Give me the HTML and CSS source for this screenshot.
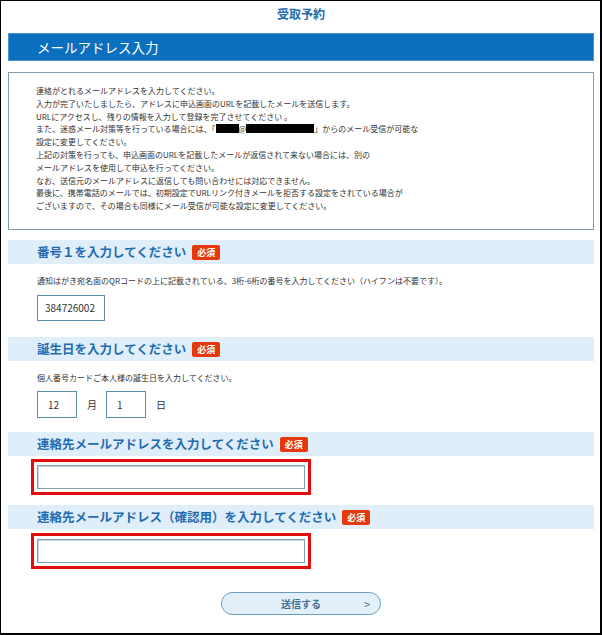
FILE: index.html
```html
<!DOCTYPE html>
<html lang="ja">
<head>
<meta charset="UTF-8">
<title>受取予約</title>
<link rel="stylesheet" href="styles.css">
</head>
<body>
<div class="frame">
	<h1 class="page-title">受取予約</h1>
	<div class="bar">メールアドレス入力</div>

	<div class="notice">
		<p>連絡がとれるメールアドレスを入力してください。</p>
		<p>入力が完了いたしましたら、アドレスに申込画面のURLを記載したメールを送信します。</p>
		<p>URLにアクセスし、残りの情報を入力して登録を完了させてください 。</p>
		<p>また、迷惑メール対策等を行っている場合には、「<span class="mask mask-a"></span>@<span class="mask mask-b"></span>」からのメール受信が可能な</p>
		<p>設定に変更してください。</p>
		<p>上記の対策を行っても、申込画面のURLを記載したメールが返信されて来ない場合には、別の</p>
		<p>メールアドレスを使用して申込を行ってください。</p>
		<p>なお、送信元のメールアドレスに返信しても問い合わせには対応できません。</p>
		<p>最後に、携帯電話のメールでは、初期設定でURLリンク付きメールを拒否する設定をされている場合が</p>
		<p>ございますので、その場合も同様にメール受信が可能な設定に変更してください。</p>
	</div>

	<div class="field first">
		<h2 class="field-head">番号１を入力してください<span class="req">必須</span></h2>
		<p class="desc">通知はがき宛名面のQRコードの上に記載されている、3桁-6桁の番号を入力してください（ハイフンは不要です）。</p>
		<div class="row"><span class="box num">384726002</span></div>
	</div>

	<div class="field second">
		<h2 class="field-head">誕生日を入力してください<span class="req">必須</span></h2>
		<p class="desc">個人番号カードご本人様の誕生日を入力してください。</p>
		<div class="row date">
			<span class="box small">12</span><span class="unit">月</span>
			<span class="box small">1</span><span class="unit">日</span>
		</div>
	</div>

	<div class="field third">
		<h2 class="field-head">連絡先メールアドレスを入力してください<span class="req">必須</span></h2>
		<div class="mark"><span class="box wide"></span></div>
	</div>

	<div class="field fourth">
		<h2 class="field-head">連絡先メールアドレス（確認用）を入力してください<span class="req">必須</span></h2>
		<div class="mark"><span class="box wide"></span></div>
	</div>

	<div class="actions">
		<button class="send" type="button"><span>送信する</span><span class="arrow">&gt;</span></button>
	</div>
</div>
</body>
</html>
```

FILE: styles.css
```css
* {
	margin: 0;
	padding: 0;
	box-sizing: border-box;
}

body {
	font-family: "Noto Sans CJK JP", "Noto Sans", sans-serif;
	color: #333;
	background: #fff;
}

.frame {
	width: 602px;
	height: 635px;
	border-style: solid;
	border-color: #000;
	border-width: 1px 2px 2px 1px;
	padding: 0 6px 0 7px;
}

.page-title {
	height: 32px;
	line-height: 26px;
	text-align: center;
	font-size: 12px;
	font-weight: bold;
	color: #1f6cb0;
}

.bar {
	height: 28px;
	line-height: 27px;
	padding-left: 28px;
	background: #0a6fbe;
	border: 1px solid #4a95d0;
	color: #fff;
	font-size: 13.5px;
}

.notice {
	margin-top: 11px;
	height: 158px;
	border: 1px solid #7c9cb0;
	padding: 12px 0 0 27px;
	font-size: 8px;
	line-height: 12.8px;
	color: #333;
}

.mask {
	display: inline-block;
	height: 9px;
	vertical-align: -1px;
	background: #000;
}

.mask-a {
	width: 23px;
}

.mask-b {
	width: 68px;
}

.field-head {
	height: 24px;
	line-height: 24px;
	padding-left: 29px;
	background: #e0eef9;
	color: #1f6cb0;
	font-size: 12.5px;
	font-weight: bold;
	display: flex;
	align-items: center;
}

.req {
	margin-left: 6px;
	padding: 0 5px;
	height: 15px;
	line-height: 15px;
	background: #e5380e;
	color: #fff;
	font-size: 9px;
	border-radius: 2px;
}

.first {
	margin-top: 10px;
}

.second {
	margin-top: 16px;
}

.third {
	margin-top: 14px;
}

.fourth {
	margin-top: 10px;
}

.desc {
	margin-top: 11px;
	padding-left: 29px;
	font-size: 8px;
	line-height: 12px;
	color: #333;
}

.row {
	margin-top: 8px;
	padding-left: 29px;
	display: flex;
	align-items: center;
}

.date {
	margin-top: 7px;
}

.box {
	display: inline-block;
	border: 1px solid #5f8eab;
	background: #fff;
	font-size: 10px;
	color: #333;
}

.num {
	width: 68px;
	height: 26px;
	line-height: 24px;
	padding-left: 7px;
}

.small {
	width: 40px;
	height: 27px;
	line-height: 25px;
	padding-left: 10px;
}

.unit {
	width: 29px;
	padding-left: 10px;
	font-size: 10px;
}

.mark {
	margin: 3px 0 0 23px;
	width: 280px;
	border: 3px solid #e40d0d;
	padding: 3px;
}

.fourth .mark {
	margin-top: 4px;
}

.wide {
	display: block;
	width: 268px;
	height: 24px;
	border: 1px solid #7fa3b8;
	box-shadow: inset 1px 1px 0 #c9d6de;
}

.actions {
	margin-top: 23px;
	display: flex;
	justify-content: center;
}

.send {
	width: 160px;
	height: 23px;
	border: 1px solid #6b9cc0;
	border-radius: 12px;
	background: #e3f0fa;
	color: #3b6f98;
	font-family: "Noto Sans CJK JP", sans-serif;
	font-size: 10px;
	font-weight: bold;
	display: flex;
	align-items: center;
	justify-content: center;
	position: relative;
}

.arrow {
	position: absolute;
	right: 10px;
	top: 3px;
	font-size: 11px;
	font-weight: normal;
}
```
